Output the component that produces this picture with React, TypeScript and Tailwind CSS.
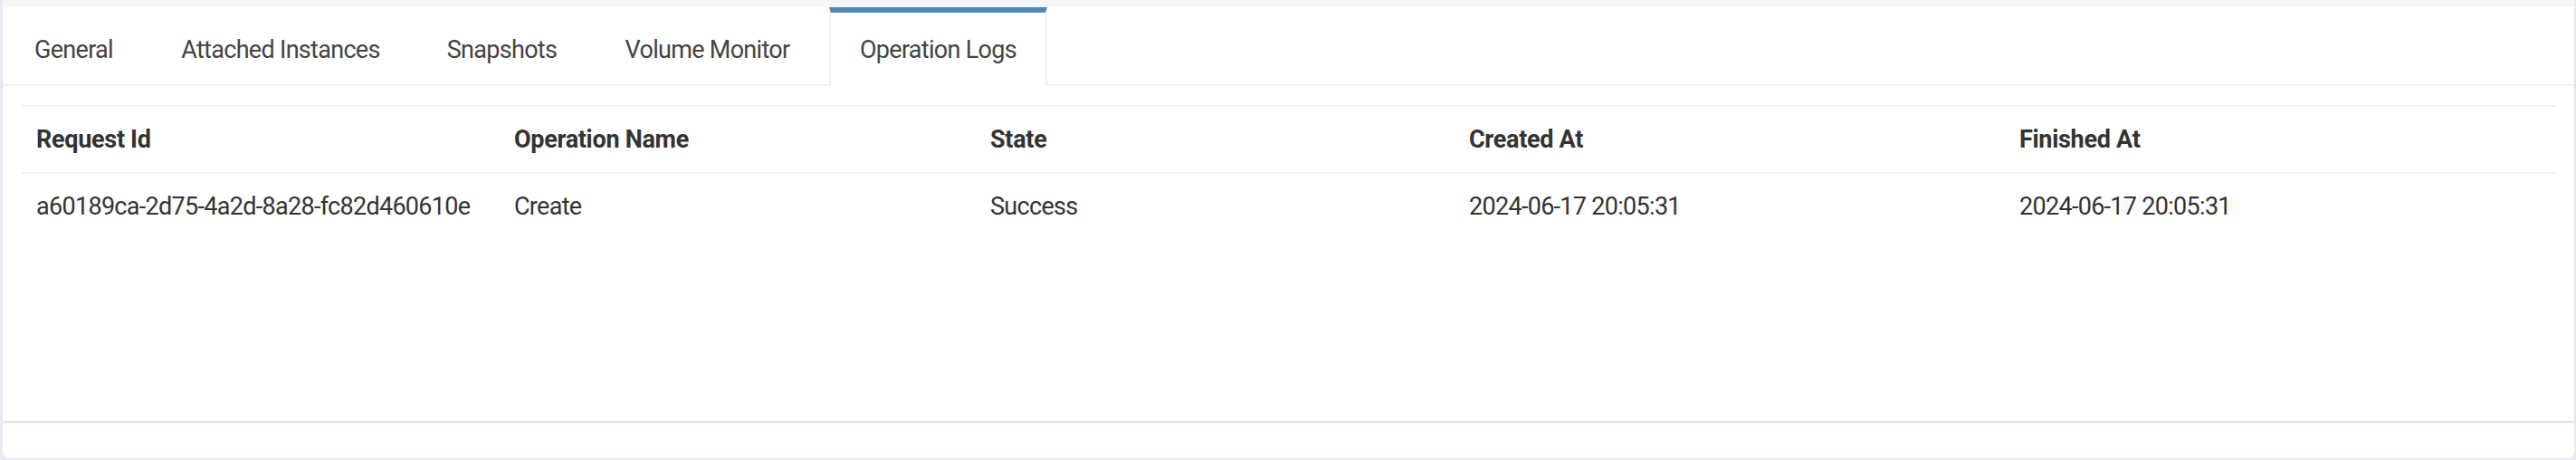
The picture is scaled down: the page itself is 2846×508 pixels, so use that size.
import React from 'react';

const tabs = [
  { name: 'General', width: 'w-[153px]' },
  { name: 'Attached Instances', width: 'w-[284px]' },
  { name: 'Snapshots', width: 'w-[185px]' },
  { name: 'Volume Monitor', width: 'w-[249px]' },
  { name: 'Operation Logs', width: 'w-[241px]' },
];

const columns = [
  { title: 'Request Id', width: 'w-[528px]' },
  { title: 'Operation Name', width: 'w-[526px]' },
  { title: 'State', width: 'w-[529px]' },
  { title: 'Created At', width: 'w-[608px]' },
  { title: 'Finished At', width: 'w-[609px]' },
];

const logs = [
  [
    'a60189ca-2d75-4a2d-8a28-fc82d460610e',
    'Create',
    'Success',
    '2024-06-17 20:05:31',
    '2024-06-17 20:05:31',
  ],
];

export default function App() {
  const active = 'Operation Logs';

  return (
    <div className="w-[2846px] h-[508px] bg-[#e8ecf2] pl-[3px] pr-[2px] pb-[2px] font-['Roboto',sans-serif] text-[27px] tracking-[-0.7px] text-[#333]">
      <div className="flex flex-col h-full bg-white rounded-b-[8px]">
        <div className="h-[8px] bg-[#f5f5f5]" />
        {/* tabbed panel */}
        <div className="flex flex-col h-[457px] bg-white shadow-[0_2px_2px_rgba(0,0,0,0.12)]">
          <div className="flex h-[87px] border-b-2 border-[#f1f1f1] pl-[2px]">
            {tabs.map((tab) => (
              <div
                key={tab.name}
                className={
                  tab.name === active
                    ? `${tab.width} mr-[10px] flex items-center justify-center pt-[4px] text-[#444] border-t-[6px] border-x-2 border-t-[#4f89b8] border-x-[#f1f1f1] bg-white -mb-[2px] pb-[2px]`
                    : `${tab.width} mr-[10px] flex items-center justify-center pt-[10px] text-[#444]`
                }
              >
                {tab.name}
              </div>
            ))}
          </div>
          <div className="pt-[21px] pl-[21px] pr-[20px]">
            <table className="w-full table-fixed border-collapse text-left">
              <thead>
                <tr className="border-y-2 border-[#f2f2f2]">
                  {columns.map((col) => (
                    <th
                      key={col.title}
                      className={`${col.width} px-[16px] py-[16px] leading-[40px] font-bold tracking-[-0.3px]`}
                    >
                      {col.title}
                    </th>
                  ))}
                </tr>
              </thead>
              <tbody>
                {logs.map((row, rowIndex) => (
                  <tr key={rowIndex}>
                    {row.map((cell, cellIndex) => (
                      <td
                        key={cellIndex}
                        className="px-[16px] py-[16px] leading-[40px] font-normal"
                      >
                        {cell}
                      </td>
                    ))}
                  </tr>
                ))}
              </tbody>
            </table>
          </div>
        </div>
        <div className="flex-1" />
      </div>
    </div>
  );
}
